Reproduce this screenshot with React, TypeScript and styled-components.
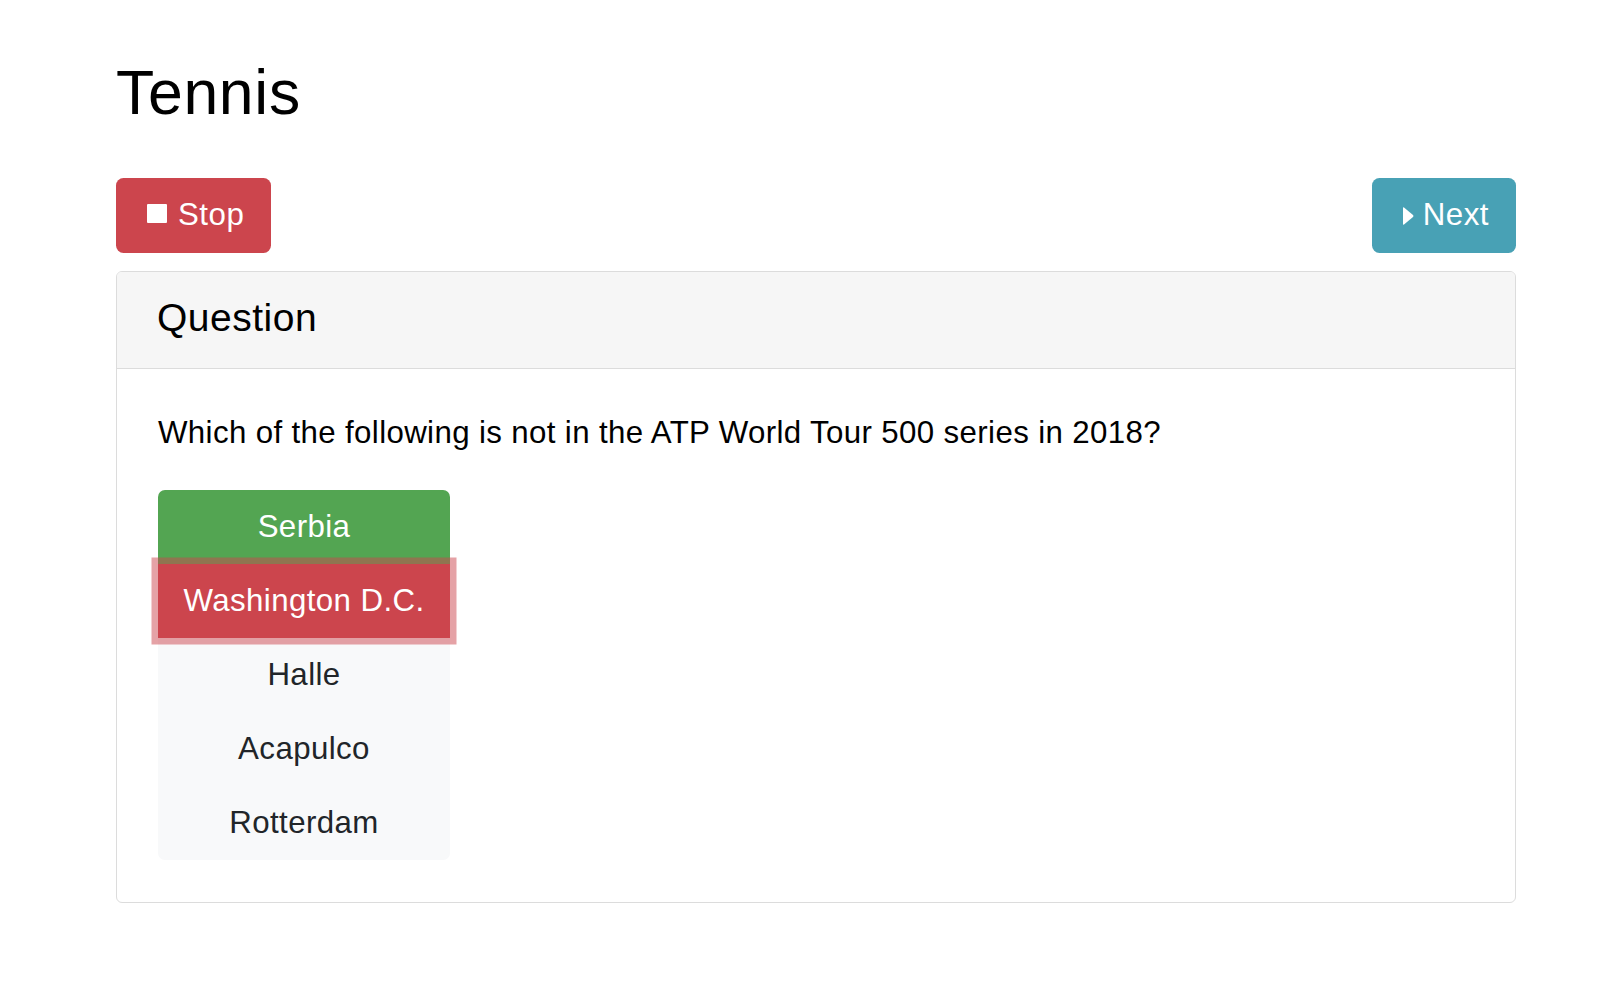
import React from "react";
import styled, { createGlobalStyle, css } from "styled-components";

const GlobalStyle = createGlobalStyle`
  html, body {
    margin: 0;
    padding: 0;
    background: #ffffff;
  }
  body {
    font-family: "Liberation Sans", Arial, Helvetica, sans-serif;
    color: #000000;
  }
  * { box-sizing: border-box; }
`;

const Page = styled.main`
  width: 1400px;
  margin-left: 116px;
  padding-top: 55px;
  padding-bottom: 60px;
`;

const Title = styled.h1`
  margin: 0;
  font-size: 62.5px;
  line-height: 74px;
  font-weight: 400;
  letter-spacing: 0.7px;
  color: #000000;
`;

const Toolbar = styled.div`
  display: flex;
  justify-content: space-between;
  align-items: center;
  margin-top: 49px;
`;

type Tone = "danger" | "info";

const toneColor: Record<Tone, string> = {
  danger: "#cc454d",
  info: "#48a1b5",
};

const ActionButton = styled.button<{ $tone: Tone }>`
  display: inline-flex;
  align-items: center;
  height: 75px;
  padding: 0 27px 0 31px;
  border: none;
  border-radius: 7.5px;
  background: ${(p) => toneColor[p.$tone]};
  color: #ffffff;
  font-family: inherit;
  font-size: 31.25px;
  line-height: 46.9px;
  letter-spacing: 0.5px;
  cursor: pointer;
`;

const StopIcon = styled.span`
  display: inline-block;
  width: 19.5px;
  height: 19.5px;
  margin-right: 11.5px;
  margin-top: -4px;
  background: #ffffff;
  border-radius: 1px;
`;

const CaretIcon = styled.svg`
  width: 11px;
  height: 20px;
  margin-right: 8.5px;
  flex: none;
`;

const Card = styled.section`
  margin-top: 18px;
  border: 1px solid #dcdcdc;
  border-radius: 6px;
  overflow: hidden;
  background: #ffffff;
`;

const CardHeader = styled.header`
  background: #f6f6f6;
  border-bottom: 1px solid #dcdcdc;
  padding: 23px 40px 26px;
  font-size: 39px;
  line-height: 46.8px;
  letter-spacing: 0.5px;
  color: #000000;
`;

const CardBody = styled.div`
  padding: 41px 41px 42px;
`;

const QuestionText = styled.p`
  margin: 0 0 33px;
  font-size: 31.25px;
  line-height: 46.9px;
  letter-spacing: 0.36px;
  color: #000000;
`;

const Options = styled.div`
  display: flex;
  flex-direction: column;
  width: 292px;
`;

type OptionState = "correct" | "wrong" | "plain";

const OptionButton = styled.button<{ $state: OptionState }>`
  display: flex;
  align-items: center;
  justify-content: center;
  height: 74px;
  border: none;
  padding: 0;
  font-family: inherit;
  font-size: 31.25px;
  line-height: 74px;
  letter-spacing: 0.4px;
  cursor: pointer;

  &:first-child {
    border-top-left-radius: 7px;
    border-top-right-radius: 7px;
  }
  &:last-child {
    border-bottom-left-radius: 7px;
    border-bottom-right-radius: 7px;
  }

  ${(p) =>
    p.$state === "correct" &&
    css`
      background: #53a552;
      color: #ffffff;
    `}
  ${(p) =>
    p.$state === "wrong" &&
    css`
      background: #cc454d;
      color: #ffffff;
      position: relative;
      z-index: 1;
      box-shadow: 0 0 0 6.5px rgba(204, 69, 77, 0.5);
    `}
  ${(p) =>
    p.$state === "plain" &&
    css`
      background: #f8f9fa;
      color: #212529;
    `}
`;

const options: { label: string; state: OptionState }[] = [
  { label: "Serbia", state: "correct" },
  { label: "Washington D.C.", state: "wrong" },
  { label: "Halle", state: "plain" },
  { label: "Acapulco", state: "plain" },
  { label: "Rotterdam", state: "plain" },
];

export default function App() {
  return (
    <>
      <GlobalStyle />
      <Page>
        <Title>Tennis</Title>
        <Toolbar>
          <ActionButton $tone="danger">
            <StopIcon />
            Stop
          </ActionButton>
          <ActionButton $tone="info">
            <CaretIcon viewBox="0 0 11 20">
              <path d="M1 1.5 L10 9 Q11 10 10 11 L1 18.5 Q0 19.3 0 18 L0 2 Q0 0.7 1 1.5 Z" fill="#ffffff" />
            </CaretIcon>
            Next
          </ActionButton>
        </Toolbar>
        <Card>
          <CardHeader>Question</CardHeader>
          <CardBody>
            <QuestionText>
              Which of the following is not in the ATP World Tour 500 series in 2018?
            </QuestionText>
            <Options>
              {options.map((o) => (
                <OptionButton key={o.label} $state={o.state}>
                  {o.label}
                </OptionButton>
              ))}
            </Options>
          </CardBody>
        </Card>
      </Page>
    </>
  );
}
